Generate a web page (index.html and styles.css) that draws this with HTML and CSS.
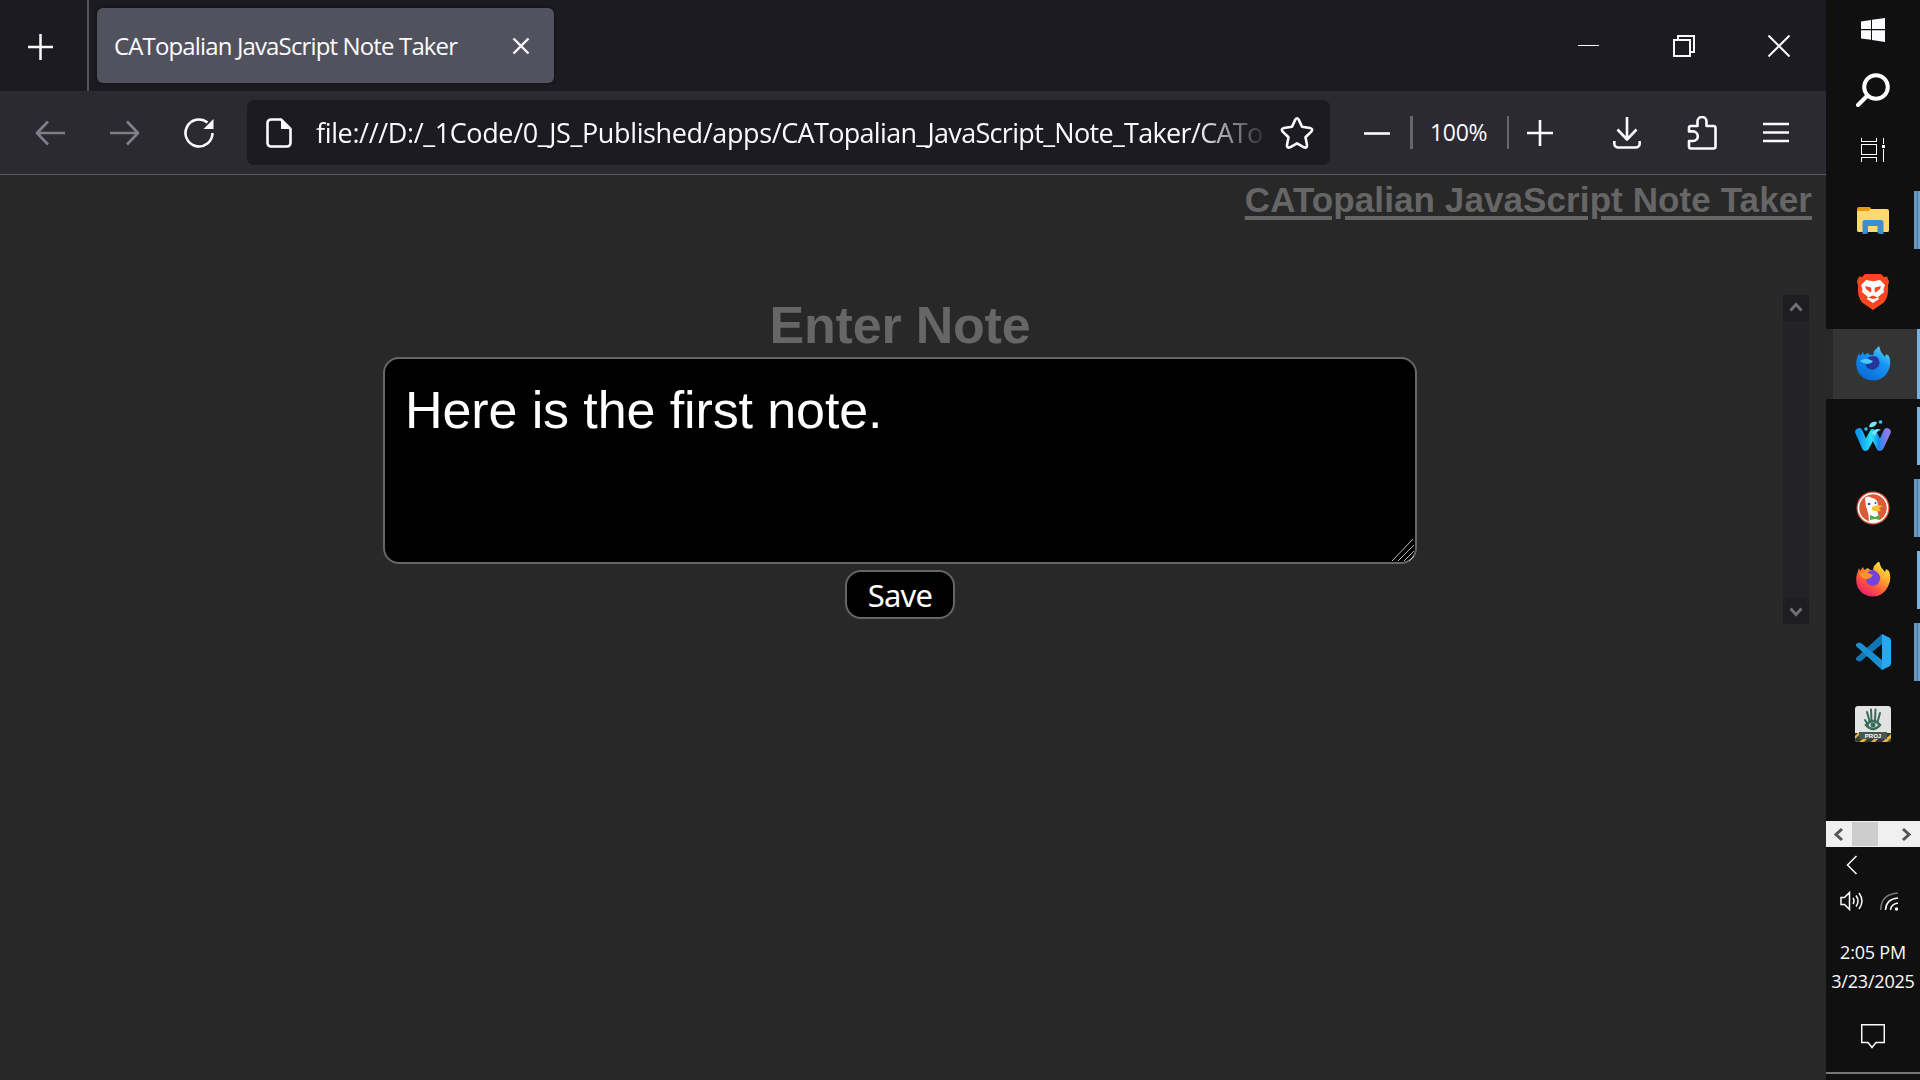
FILE: index.html
```html
<!DOCTYPE html>
<html lang="en">
<head>
<meta charset="utf-8">
<title>CATopalian JavaScript Note Taker</title>
<link rel="stylesheet" href="styles.css">
</head>
<body>
<div class="browser">
  <header class="tabs">
    <button class="new-tab" aria-label="New tab"><svg width="25" height="26" viewBox="0 0 25 26"><path d="M0 13H25M12.5 0V26"/></svg></button>
    <div class="tab">
      <span class="tab-title">CATopalian JavaScript Note Taker</span>
      <svg class="tab-close" width="18" height="18" viewBox="0 0 18 18"><path d="M1.5 1.5l15 15M16.5 1.5l-15 15"/></svg>
    </div>
    <div class="window-controls">
      <svg width="22" height="22" viewBox="0 0 22 22"><path class="hair" d="M0 10.5H21"/></svg>
      <svg width="22" height="22" viewBox="0 0 22 22"><path class="crisp" d="M1 5H17V21H1ZM5 5V1H21V17H17"/></svg>
      <svg width="22" height="22" viewBox="0 0 22 22"><path d="M.5 .5l21 21M21.5 .5l-21 21"/></svg>
    </div>
  </header>
  <nav class="toolbar">
    <svg class="dim back" width="30" height="26" viewBox="0 0 30 26"><path d="M30 13H2M13 1.5L2 13l11 11.5"/></svg>
    <svg class="dim forward" width="30" height="26" viewBox="0 0 30 26"><path d="M0 13H28M17 1.5L28 13 17 24.5"/></svg>
    <svg class="reload" width="30" height="30" viewBox="0 0 30 30"><path d="M28.5 15A13.5 13.5 0 1 1 23.5 4.5"/><path class="fill" d="M29.5 1V11H19.5Z"/></svg>
    <div class="address">
      <svg class="page-icon" width="26" height="30" viewBox="0 0 26 30"><path d="M5 1.5H15L24.5 11V25a3.5 3.5 0 0 1-3.5 3.5H5A3.5 3.5 0 0 1 1.5 25V5A3.5 3.5 0 0 1 5 1.5Z"/><path class="fill" d="M15 1V11H25Z"/></svg>
      <span class="url"><span class="url-head">file:///D:/_1Code/0_JS_Published/apps/</span>CATopalian_JavaScript_Note_Taker/CATop</span>
      <svg class="star" width="34" height="32" viewBox="0 0 34 32"><path d="M15.3 2.6Q17 0 18.7 2.6L22 9.8 30 11Q33.5 12 31.3 14.6L25.5 20.3 27 28Q27.2 31.5 24 30.3L17 26.3 10 30.3Q6.8 31.5 7 28L8.500 20.300 2.700 14.600Q.5 12 4 11L12 9.800Z"/></svg>
    </div>
    <svg class="zoom-out" width="26" height="26" viewBox="0 0 26 26"><path d="M0 13.500H26"/></svg>
    <i class="rule wide"></i>
    <span class="percent">100%</span>
    <i class="rule"></i>
    <svg class="zoom-in" width="26" height="26" viewBox="0 0 26 26"><path d="M0 13H26M13 0V26"/></svg>
    <svg class="download" width="28" height="32" viewBox="0 0 28 32"><path d="M14 0V22M4.500 12.500L14 22.500 23.500 12.500M1.300 24V26.500a4 4 0 0 0 4 4H22.700a4 4 0 0 0 4-4V24"/></svg>
    <svg class="puzzle" width="30" height="34" viewBox="0 0 30 34"><path d="M10.500 10V5.500a4.500 4.500 0 0 1 9 0V10H26.500a2 2 0 0 1 2 2V30.500a2 2 0 0 1-2 2H4a2 2 0 0 1-2-2V25H6a4.800 4.800 0 0 0 0-9.600H2V12a2 2 0 0 1 2-2Z"/></svg>
    <svg class="menu" width="26" height="22" viewBox="0 0 26 22"><path d="M0 2H26M0 10.500H26M0 19H26"/></svg>
  </nav>
  <main class="page">
    <a class="app-link">CATopalian JavaScript Note Taker</a>
    <div class="note-row">
      <section class="note-form">
        <h1 class="heading">Enter Note</h1>
        <div class="note-box">Here is the first note.
          <svg class="grip" width="24" height="24" viewBox="0 0 24 24"><path d="M1 23L22 1M7 23L23 7M13 23L23 13M18 23l5-5"/></svg>
        </div>
        <button class="save">Save</button>
      </section>
      <div class="scroll-y">
        <svg width="26" height="26" viewBox="0 0 26 26"><path d="M7.500 15.500L13 9.500 18.500 15.500"/></svg>
        <svg width="26" height="26" viewBox="0 0 26 26"><path d="M7.500 10.500L13 16.500 18.500 10.500"/></svg>
      </div>
    </div>
  </main>
</div>
<aside class="taskbar">
  <div class="slot sys"><svg width="24" height="24" viewBox="0 0 24 24"><path class="fill" d="M0 3.500L10 2V11H0ZM11 1.800L24 0V11H11ZM0 12.300H10V21.800L0 20.500ZM11 12.300H24V24L11 22Z"/></svg></div>
  <div class="slot sys"><svg width="34" height="34" viewBox="0 0 34 34"><circle class="lens" cx="20" cy="14" r="11.800"/><path class="handle" d="M11.500 22.500L2 32"/></svg></div>
  <div class="slot sys last-sys"><svg width="24" height="24" viewBox="0 0 24 24"><path class="hair" d="M.5 0V3.500H15.500V0M.5 6.500H15.500V16.500H.5ZM.5 23.500V19.500H15.500V23.500M22.500 0V6M22.500 11V23.500"/><path class="fill" d="M21 7h3v3h-3z"/></svg></div>
  <div class="slot app grouped"><svg width="36" height="36" viewBox="0 0 36 36"><path fill="#e59b0c" d="M2 7q0-2 2-2h10q2 0 2 2l1 3H2Z"/><path fill="#ffd86f" d="M2 9h11l3-2h16q2 0 2 2v19.500q0 1.500-2 1.500H4q-2 0-2-1.500Z"/><path fill="#3a8fd4" d="M7.500 32V20.500q0-2.500 2.500-2.500h16q2.500 0 2.500 2.500V32q-6 0-6-1.500V24H13v6.500q0 1.500-5.500 1.500Z"/></svg></div>
  <div class="slot app"><svg width="36" height="36" viewBox="0 0 36 36"><path fill="#fb4620" d="M10 0H26l3 3 3-.5 2 5-1 4q1 11-4 17L18 36 7 28.500Q2 22 3 11.500L2 7.500l2-5 3 .5Z"/><path fill="#fff" d="M11 6l7 1.300L25 6l5 5-1.500 4 .5 3-6 5 1 2-6 4-6-4 1-2-6-5 .5-3L6 11Z"/><path fill="#fb4620" d="M10 12l6 1.500 .5 3.500-1 1.500-4.500-3.500ZM26 12l-6 1.500-.5 3.500 1 1.500 4.500-3.500ZM13 23.500l5-2 5 2-5 1.500Z"/></svg></div>
  <div class="slot app open active"><svg width="36" height="36" viewBox="0 0 36 36"><defs><linearGradient id="dev" x1="1" y1="0" x2=".3" y2="1"><stop offset="0" stop-color="#6be7f5"/><stop offset=".45" stop-color="#1794f4"/><stop offset="1" stop-color="#086bd6"/></linearGradient></defs><path fill="url(#dev)" d="M4 7l1 3 3-4 1 3 4-2 2 2h3l1-4 5-5 2 6 4 5 1-3 3 2q3 8-1 15.500Q28 34.500 18 34.500 8 34.500 3 26 0 19 2 12Z"/><path fill="#24369b" d="M12 12q7-4 11 0 3 5 0 9-4 4-9 2-4-2-3-5l6-2Z"/><path fill="#46ccf8" d="M5 15q4-3 8-2l5 2q-2 3-5 3-4 0-8-3Z"/></svg></div>
  <div class="slot app open"><svg width="36" height="36" viewBox="0 0 36 36"><defs><linearGradient id="water"><stop offset="0" stop-color="#0c98ef"/><stop offset=".45" stop-color="#2ae2f6"/><stop offset=".7" stop-color="#168df0"/><stop offset="1" stop-color="#9278e8"/></linearGradient></defs><path fill="none" stroke="url(#water)" stroke-width="7.500" stroke-linecap="round" stroke-linejoin="round" d="M4 14l6.500 15L18 15l7 14 7-15"/><path fill="#72e8fa" d="M14 9q1-6 8-5-1 6-8 5ZM17 15q4-6 9-3-5 1-6 6Z"/><circle fill="#3dc6f4" cx="25.500" cy="4" r="1.800"/><circle fill="#3dc6f4" cx="11" cy="11" r="1.700"/></svg></div>
  <div class="slot app grouped"><svg width="36" height="36" viewBox="0 0 36 36"><circle cx="18" cy="18" r="16.500" fill="#dc5a38"/><circle cx="18" cy="18" r="14.500" fill="none" stroke="#fff" stroke-width="1.500"/><path fill="#fff" d="M10 8q3-3 7 0 6 1 6 7l-1 5 3 11q-6 2-11 .5 0-8-3-15Z"/><path fill="#fbc02d" d="M17 17q5-3 11-1l-4 2 2 3q-6 1-9-1Z"/><path fill="#58a946" d="M15 25l5 2 5-2v5l-5-1-5 1Z"/><circle cx="14" cy="14" r="1.300" fill="#245c8c"/><circle cx="20.500" cy="13" r="1" fill="#245c8c"/></svg></div>
  <div class="slot app open"><svg width="36" height="36" viewBox="0 0 36 36"><defs><linearGradient id="fox" x1="1" y1="0" x2=".3" y2="1"><stop offset="0" stop-color="#fff44f"/><stop offset=".4" stop-color="#ffb22e"/><stop offset=".7" stop-color="#ff5a3c"/><stop offset="1" stop-color="#ed1f6b"/></linearGradient></defs><path fill="url(#fox)" d="M4 6l1 3 3-4 1 3 4-2 2 2h3l1-4 5-5 2 6 4 5 1-3 3 2q3 8-1 15.500Q28 34.500 18 34.500 8 34.500 3 26 0 19 2 12Z"/><path fill="#7543d9" d="M12 12q1-4 7-4 7 4 6 9-1 7-8 7-5-1-6-6Z"/><path fill="#ff9429" d="M4 12q5-3 9-1l5 2q-3 4-6 4-5 0-8-5Z"/></svg></div>
  <div class="slot app grouped"><svg width="36" height="36" viewBox="0 0 36 36"><path fill="#1176b5" d="M1 24L27 0V10L6 27Q4 28 3 27L1 26Z"/><path fill="#1a8fd2" d="M1 12L1 10 3 9Q4 8 6 9L27 26V36Z"/><path fill="#28a8f1" d="M27 0l7 3.500q2 1 2 3v23q0 2-2 3L27 36V0Z"/></svg></div>
  <div class="slot app"><svg width="36" height="36" viewBox="0 0 36 36"><rect width="36" height="36" rx="3" fill="#e2e4e4"/><path fill="none" stroke="#396a5a" stroke-width="2" stroke-linecap="round" d="M12 6l2.500 9M16 3.500l.5 11M20.500 3.500l-.5 11M25 7l-2.500 9M10 14l3 5"/><path fill="none" stroke="#396a5a" stroke-width="2.500" d="M11 19q7-8 14 0-7 8-14 0Z"/><circle cx="18" cy="19" r="2.500" fill="#396a5a"/><path fill="#33392e" d="M0 27h36v6q0 3-3 3H3q-3 0-3-3Z"/><path fill="#e7ba35" d="M0 30l3-3h3l-6 6ZM4 36l5-4h4l-4 4ZM16 36l4-4h4l-4 4ZM27 36l9-8v4l-4 4Z"/><rect x="4" y="26" width="28" height="7" fill="#485752"/><text class="badge-text" x="18" y="32">PROJ</text></svg></div>
  <div class="scroll-x">
    <svg width="26" height="26" viewBox="0 0 26 26"><path d="M16 8L10 13.500 16 19"/></svg>
    <i class="thumb"></i>
    <svg width="26" height="26" viewBox="0 0 26 26"><path d="M9 8L15 13.500 9 19"/></svg>
  </div>
  <svg class="tray-arrow" width="12" height="20" viewBox="0 0 12 20"><path d="M10.500 1L1.500 10 10.500 19"/></svg>
  <div class="status">
    <svg width="24" height="20" viewBox="0 0 24 20"><path d="M1 6.500H4.500L9.500 1.500V18.500L4.500 13.500H1ZM13 7q2 3 0 6M16 4.500q4 5.500 0 11M19 2q6 8 0 16"/></svg>
    <svg width="19" height="19" viewBox="0 0 19 19"><path class="faint" d="M.7 18Q1 2 18 1"/><path d="M5.500 18Q6 7 18 6M10.500 18q.5-6 7.500-7"/><circle class="fill" cx="16.500" cy="17" r="1.700"/></svg>
  </div>
  <div class="clock"><div class="time">2:05 PM</div><div class="date">3/23/2025</div></div>
  <svg class="notice" width="24" height="25" viewBox="0 0 24 25"><path d="M.7 .7H23.300V18.500H15L11 23.500 7 18.500H.7Z"/></svg>
  <i class="desktop-line"></i>
</aside>
</body>
</html>
```
FILE: styles.css
```css
* { box-sizing: border-box; }
body { margin: 0; width: 1920px; height: 1080px; display: flex; overflow: hidden; background: #282828; color: #fbfbfe; font-family: "Open Sans", "Noto Sans", sans-serif; }
button { padding: 0; border: 0; color: inherit; }
svg { display: block; flex: none; fill: none; stroke: #fbfbfe; stroke-width: 2; }
.fill { fill: #fbfbfe; stroke: none; }
.hair { stroke-width: 1; shape-rendering: crispEdges; }
.crisp { shape-rendering: crispEdges; }

.browser { width: 1826px; height: 1080px; display: flex; flex-direction: column; }
.tabs { height: 91px; flex: none; display: flex; align-items: center; background: #1c1b22; }
.new-tab { width: 89px; height: 91px; display: flex; align-items: center; padding: 2px 0 0 28px; background: none; border-right: 2px solid #56555f; }
.new-tab svg { stroke-width: 2.5; }
.tab { width: 457px; height: 75px; margin-left: 8px; padding: 0 24px 0 17px; display: flex; align-items: center; justify-content: space-between; background: #52525e; border-radius: 6px; box-shadow: 0 0 4px rgba(0, 0, 0, .5); }
.tab-title { font-size: 24px; line-height: 34px; letter-spacing: -.86px; white-space: nowrap; }
.tab-close { stroke-width: 2.4; }
.window-controls { margin-left: auto; padding-right: 36px; display: flex; gap: 73px; }

.toolbar { height: 84px; flex: none; display: flex; align-items: center; background: #2b2a33; border-bottom: 1px solid #5b5a65; padding-left: 35px; }
.toolbar svg { stroke-width: 2.6; stroke-linejoin: round; }
.toolbar .dim { stroke: #807f88; }
.forward { margin-left: 45px; }
.reload { margin-left: 44px; }
.address { width: 1083px; height: 65px; margin-left: 33px; padding: 0 17px 0 19px; display: flex; align-items: center; background: #1c1b22; border-radius: 7px; }
.url { width: 948px; margin: 0 16px 0 24px; white-space: nowrap; font-size: 27px; line-height: 40px; letter-spacing: -.68px; padding-top: 1px; -webkit-mask-image: linear-gradient(to right, #000 880px, transparent 954px); mask-image: linear-gradient(to right, #000 880px, transparent 954px); }
.url-head { letter-spacing: -.37px; }
.zoom-out { margin-left: 34px; }
.rule { width: 2px; height: 33px; background: #67666f; }
.rule.wide { width: 3px; margin-left: 20px; }
.percent { width: 58px; margin: 0 19px 0 17px; font-size: 23px; line-height: 30px; letter-spacing: -.3px; white-space: nowrap; padding-bottom: 1px; }
.zoom-in { margin-left: 18px; }
.download { margin-left: 60px; }
.puzzle { margin-left: 46px; }
.menu { margin-left: 46px; }

.page { flex: 1; background: #282828; font-family: "Liberation Sans", Arial, sans-serif; display: flex; flex-direction: column; }
.app-link { align-self: flex-end; margin: 4px 14px 0 0; font-size: 35px; line-height: 42px; letter-spacing: .1px; font-weight: bold; color: #666; text-decoration: underline; text-decoration-thickness: 4px; text-underline-offset: 4px; white-space: nowrap; }
.note-row { display: flex; margin-top: 74px; padding-left: 383px; justify-content: space-between; padding-right: 17px; }
.note-form { width: 1034px; display: flex; flex-direction: column; align-items: center; }
.heading { margin: 0; font-size: 52px; line-height: 60px; height: 62px; letter-spacing: -.2px; color: #666; font-weight: bold; }
.note-box { position: relative; width: 1034px; height: 207px; padding: 20px; background: #000; border: 2px solid #666; border-radius: 16px; color: #fff; font-size: 52px; line-height: 62px; letter-spacing: -.1px; }
.grip { position: absolute; right: 0; bottom: 0; }
.note-box .grip { stroke: #bbb; stroke-width: 1; }
.save { width: 110px; height: 49px; margin-top: 6px; border: 2px solid #666; border-radius: 16px; background: #000; color: #fff; font: 31px/44px "Noto Sans", sans-serif; letter-spacing: -.8px; }
.scroll-y { width: 26px; height: 329px; display: flex; flex-direction: column; justify-content: space-between; background: #232325; }
.scroll-y svg { background: #1e1e20; stroke: #707073; stroke-width: 3; }

.taskbar { width: 94px; height: 1080px; background: #101010; display: flex; flex-direction: column; }
.slot { flex: none; display: flex; align-items: center; justify-content: center; }
.sys { height: 60px; }
.last-sys { margin-bottom: 4px; }
.sys svg { stroke: #fff; }
.lens, .handle { stroke-width: 4; stroke-linecap: round; }
.app { height: 72px; }
.app svg { stroke: none; }
.grouped, .open { background: linear-gradient(#74b3e3, #74b3e3) right center / 3px 58px no-repeat; }
.grouped { background: linear-gradient(to right, #6798c1 3px, #4c779b 3px, #4c779b 4px, #6ba3d0 4px) right center / 6px 58px no-repeat; }
.active { height: 70px; margin: 1px 0; background: linear-gradient(#74b3e3, #74b3e3) right center / 3px 70px no-repeat, linear-gradient(to right, #292929 7px, #343434 7px); }
.badge-text { font: bold 6px "Liberation Sans", sans-serif; fill: #fff; text-anchor: middle; }
.scroll-x { height: 26px; flex: none; margin-top: 61px; display: flex; background: #f0f0f0; }
.scroll-x svg { stroke: #555; stroke-width: 3; }
.thumb { width: 26px; height: 24px; margin: 1px 16px 1px 0; background: #cdcdcd; }
.tray-arrow { margin: 8px 0 0 20px; }
.status { height: 20px; margin-top: 16px; padding: 0 21px 0 14px; display: flex; justify-content: space-between; align-items: center; }
.status svg, .tray-arrow, .notice { stroke-width: 1.5; }
.status .faint { stroke: #777; }
.clock { margin-top: 27px; text-align: center; font-size: 18px; line-height: 29px; letter-spacing: -.2px; white-space: nowrap; }
.notice { margin: 28px auto 0 35px; }
.desktop-line { height: 2px; margin-top: 23px; background: #777; }
```
